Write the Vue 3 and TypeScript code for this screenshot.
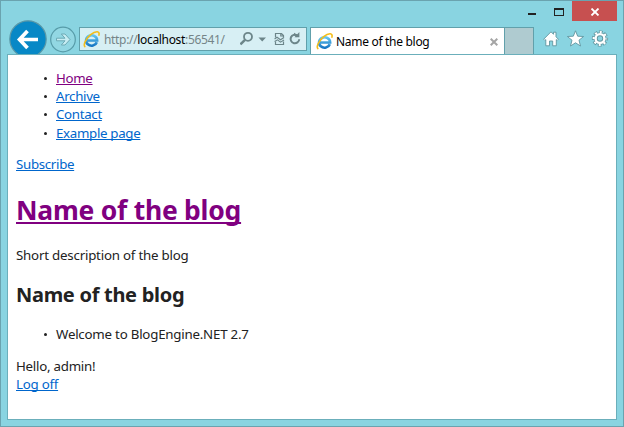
<script setup lang="ts">
interface NavLink {
  label: string
  visited?: boolean
}

const blogName = 'Name of the blog'
const links: NavLink[] = [
  { label: 'Home', visited: true },
  { label: 'Archive' },
  { label: 'Contact' },
  { label: 'Example page' },
]
</script>

<template>
  <div class="window">
    <svg width="0" height="0" class="defs" aria-hidden="true">
      <defs>
        <linearGradient id="ieBlue" x1="0" y1="0" x2="0" y2="1">
          <stop offset="0" stop-color="#62c5f0" />
          <stop offset="1" stop-color="#1877c4" />
        </linearGradient>
        <symbol id="ie" viewBox="0 0 16 16">
          <path d="M13 10.6A5.2 4.9 0 1 1 13.3 8.9H4.2" fill="none" stroke="url(#ieBlue)" stroke-width="2.5" />
          <path d="M2.2 15.1C-.4 13.6 2.5 7.3 7.2 3.5C11.8-.2 16.5-.4 14.8 4.4" fill="none" stroke="#f4bd19" stroke-width="1.5" />
        </symbol>
      </defs>
    </svg>

    <header class="chrome">
      <div class="captions">
        <button class="caption minimize" aria-label="Minimize"><i></i></button>
        <button class="caption maximize" aria-label="Maximize"><i></i></button>
        <button class="caption close" aria-label="Close">
          <svg width="10" height="8" viewBox="0 0 10 8"><path d="M1.5.5L8.5 7.5M8.5.5L1.5 7.5" stroke="#fff" stroke-width="1.8" /></svg>
        </button>
      </div>
      <div class="toolbar">
        <svg class="history" width="70" height="35" viewBox="0 0 70 35">
          <circle cx="19" cy="19" r="18.2" fill="#0788c6" stroke="#5b98a7" stroke-width="1.2" />
          <path d="M29 19.5H11M18.5 11L10.5 19.5L18.5 28" fill="none" stroke="#fff" stroke-width="3.7" />
          <circle cx="54" cy="19.5" r="12.3" fill="#92d7e3" stroke="#579ba8" stroke-width="1.2" />
          <path d="M47.5 18.2H56L52.3 14H56L61 19.5L56 25H52.3L56 20.8H47.5Z" fill="#c7edf3" stroke="#6daab5" />
        </svg>
        <div class="address">
          <svg class="ie" width="17" height="17"><use href="#ie" /></svg>
          <span class="url">http://<b>localhost</b>:56541/</span>
          <svg class="tools" width="66" height="18" viewBox="0 0 66 18">
            <g fill="none" stroke="#6c8589">
              <circle cx="8" cy="6.8" r="4" stroke-width="1.8" />
              <path d="M5 9.8L.4 14.3" stroke-width="2.5" />
              <path d="M35.5 7.5V3.5H41.5L43.5 5.5V7.5M35.5 11.5V14.5H43.5V11.5M40.8 3.5V6H43.5" stroke-width="1.2" />
              <path d="M34.6 9L37 7.2L40.5 9.8L44 7.5M34.6 11.5L37.5 9.8L40.5 12.2L44 10" stroke-width="1.1" />
              <path d="M57.3 5.4A4.3 4.3 0 1 0 59.2 9.2" stroke-width="2" />
            </g>
            <path d="M18.5 7.5H26L22.2 11.5Z" fill="#6c8589" />
            <path d="M59.4 2V7.2H54.5Z" fill="#6c8589" />
            <path d="M54.3 2.7L58 5.8L56.5 7.2L53.5 4.9Z" fill="#6c8589" />
          </svg>
        </div>
        <div class="tab">
          <svg class="ie" width="17" height="17"><use href="#ie" /></svg>
          <span class="tab-title">{{ blogName }}</span>
          <svg class="tab-close" width="8" height="8" viewBox="0 0 8 8"><path d="M.7.7L7.3 7.3M7.3.7L.7 7.3" stroke="#a5a5a5" stroke-width="2" /></svg>
        </div>
        <div class="new-tab"></div>
        <svg class="commands" width="68" height="18" viewBox="0 0 68 18">
          <g fill="#fff" stroke="#60959f" stroke-width=".9" stroke-linejoin="round">
            <path d="M.7 9.2L8 1.8L10.5 4.3V2.2H13V6.8L15.4 9.2L14.2 10.4L13.3 9.6V15.8H9.7V11H6.5V15.8H2.8V9.6L1.9 10.4Z" />
            <path d="M32.5.8L34.7 6.2L40.6 6.5L36 10.2L37.5 16L32.5 12.8L27.5 16L29 10.2L24.4 6.5L30.3 6.2Z" />
          </g>
          <g fill="none">
            <circle cx="57" cy="8.5" r="6.3" stroke="#60959f" stroke-width="3.6" stroke-dasharray="3.4 1.548" stroke-dashoffset="1.7" />
            <circle cx="57" cy="8.5" r="4.3" stroke="#60959f" stroke-width="4" />
            <circle cx="57" cy="8.5" r="6.3" stroke="#fff" stroke-width="2.2" stroke-dasharray="2 2.948" stroke-dashoffset="1" />
            <circle cx="57" cy="8.5" r="4.4" stroke="#fff" stroke-width="2.4" />
          </g>
        </svg>
      </div>
    </header>

    <main class="page">
      <ul class="nav">
        <li v-for="link in links" :key="link.label">
          <a :class="{ visited: link.visited }">{{ link.label }}</a>
        </li>
      </ul>
      <div class="subscribe"><a>Subscribe</a></div>
      <h1><a class="visited">{{ blogName }}</a></h1>
      <p class="description">Short description of the blog</p>
      <h2>{{ blogName }}</h2>
      <ul class="posts"><li>Welcome to BlogEngine.NET 2.7</li></ul>
      <div class="greeting">Hello, admin!</div>
      <div class="greeting"><a>Log off</a></div>
    </main>
  </div>
</template>

<style>
body { margin: 0; overflow: hidden; }
</style>

<style scoped>
* { box-sizing: border-box; }
.window {
  width: 624px;
  height: 427px;
  display: flex;
  flex-direction: column;
  padding: 0 6px 6px;
  border: 1px solid #6aa3af;
  background: #89d4e1;
  font-family: "Noto Sans", "Open Sans", sans-serif;
  font-size: 13.3px;
  color: #222;
}
.defs { position: absolute; }
.chrome { height: 53px; flex: none; }
.captions { height: 20px; display: flex; justify-content: flex-end; }
.caption { width: 27px; height: 20px; border: 0; padding: 0; background: transparent; display: flex; align-items: center; justify-content: center; }
.minimize i { width: 8px; height: 2px; background: #222; margin-top: 6px; }
.maximize i { width: 10px; height: 8px; border: 1px solid #222; border-top-width: 2px; margin-top: 1px; }
.close { width: 45px; background: #c75050; }
.close svg { margin-top: 2px; }
.toolbar { height: 33px; display: flex; align-items: flex-start; margin-left: 1px; }
.history { margin-top: -1px; margin-left: 1px; flex: none; }
.address { width: 228px; height: 24px; margin-top: 6px; border: 1px solid #61a0ab; background: #d7eff4; display: flex; align-items: center; padding-left: 3px; flex: none; }
.ie { flex: none; }
.url { width: 128px; margin-left: 4px; font-size: 12px; letter-spacing: -.33px; color: #758588; white-space: nowrap; line-height: 20px; padding-top: 1px; }
.url b { font-weight: 400; color: #000; }
.tools { margin-left: 8px; flex: none; }
.tab { width: 195px; height: 27px; margin: 6px 0 0 3px; border: 1px solid #61a0ab; border-bottom: 0; background: #fff; display: flex; align-items: center; padding: 1px 6px 0 5px; flex: none; }
.tab-title { margin-left: 3px; font-size: 12px; letter-spacing: -.3px; color: #000; white-space: nowrap; }
.tab-close { margin-left: auto; }
.new-tab { width: 29px; height: 27px; margin-top: 6px; border: 1px solid #61a0ab; border-left: 0; border-bottom: 0; background: #afcbd0; flex: none; }
.commands { margin: 9px 0 0 9px; flex: none; }
.page { flex: 1; border: 1px solid #6bafbb; background: #fff; padding: 14px 8px 0; white-space: nowrap; letter-spacing: -.25px; }
.page ul { margin: 0; padding: 0; list-style: none; }
.page li { height: 18.2px; line-height: 18px; display: flex; align-items: center; }
.page li::before { content: ""; width: 3px; height: 3px; border-radius: 50%; background: #222; margin: 1px 9px 0 28px; }
.nav li { letter-spacing: -.32px; }
a { color: #0066cc; text-decoration: underline; text-decoration-thickness: 1px; text-underline-offset: 1px; text-decoration-skip-ink: none; }
a.visited { color: #800080; }
.subscribe { margin-top: 13.4px; line-height: 18px; letter-spacing: -.32px; }
h1 { margin: 19px 0 0; font-size: 26.5px; line-height: 36px; letter-spacing: -.25px; }
h1 a { text-decoration-thickness: 2px; text-underline-offset: 2px; }
.description { margin: 18px 0 0; line-height: 18px; letter-spacing: -.21px; }
h2 { margin: 18px 0 0; font-size: 20px; line-height: 26px; letter-spacing: -.29px; }
.page .posts { margin-top: 17px; letter-spacing: -.22px; }
.greeting { line-height: 18px; }
.posts + .greeting { margin-top: 14px; }
</style>
